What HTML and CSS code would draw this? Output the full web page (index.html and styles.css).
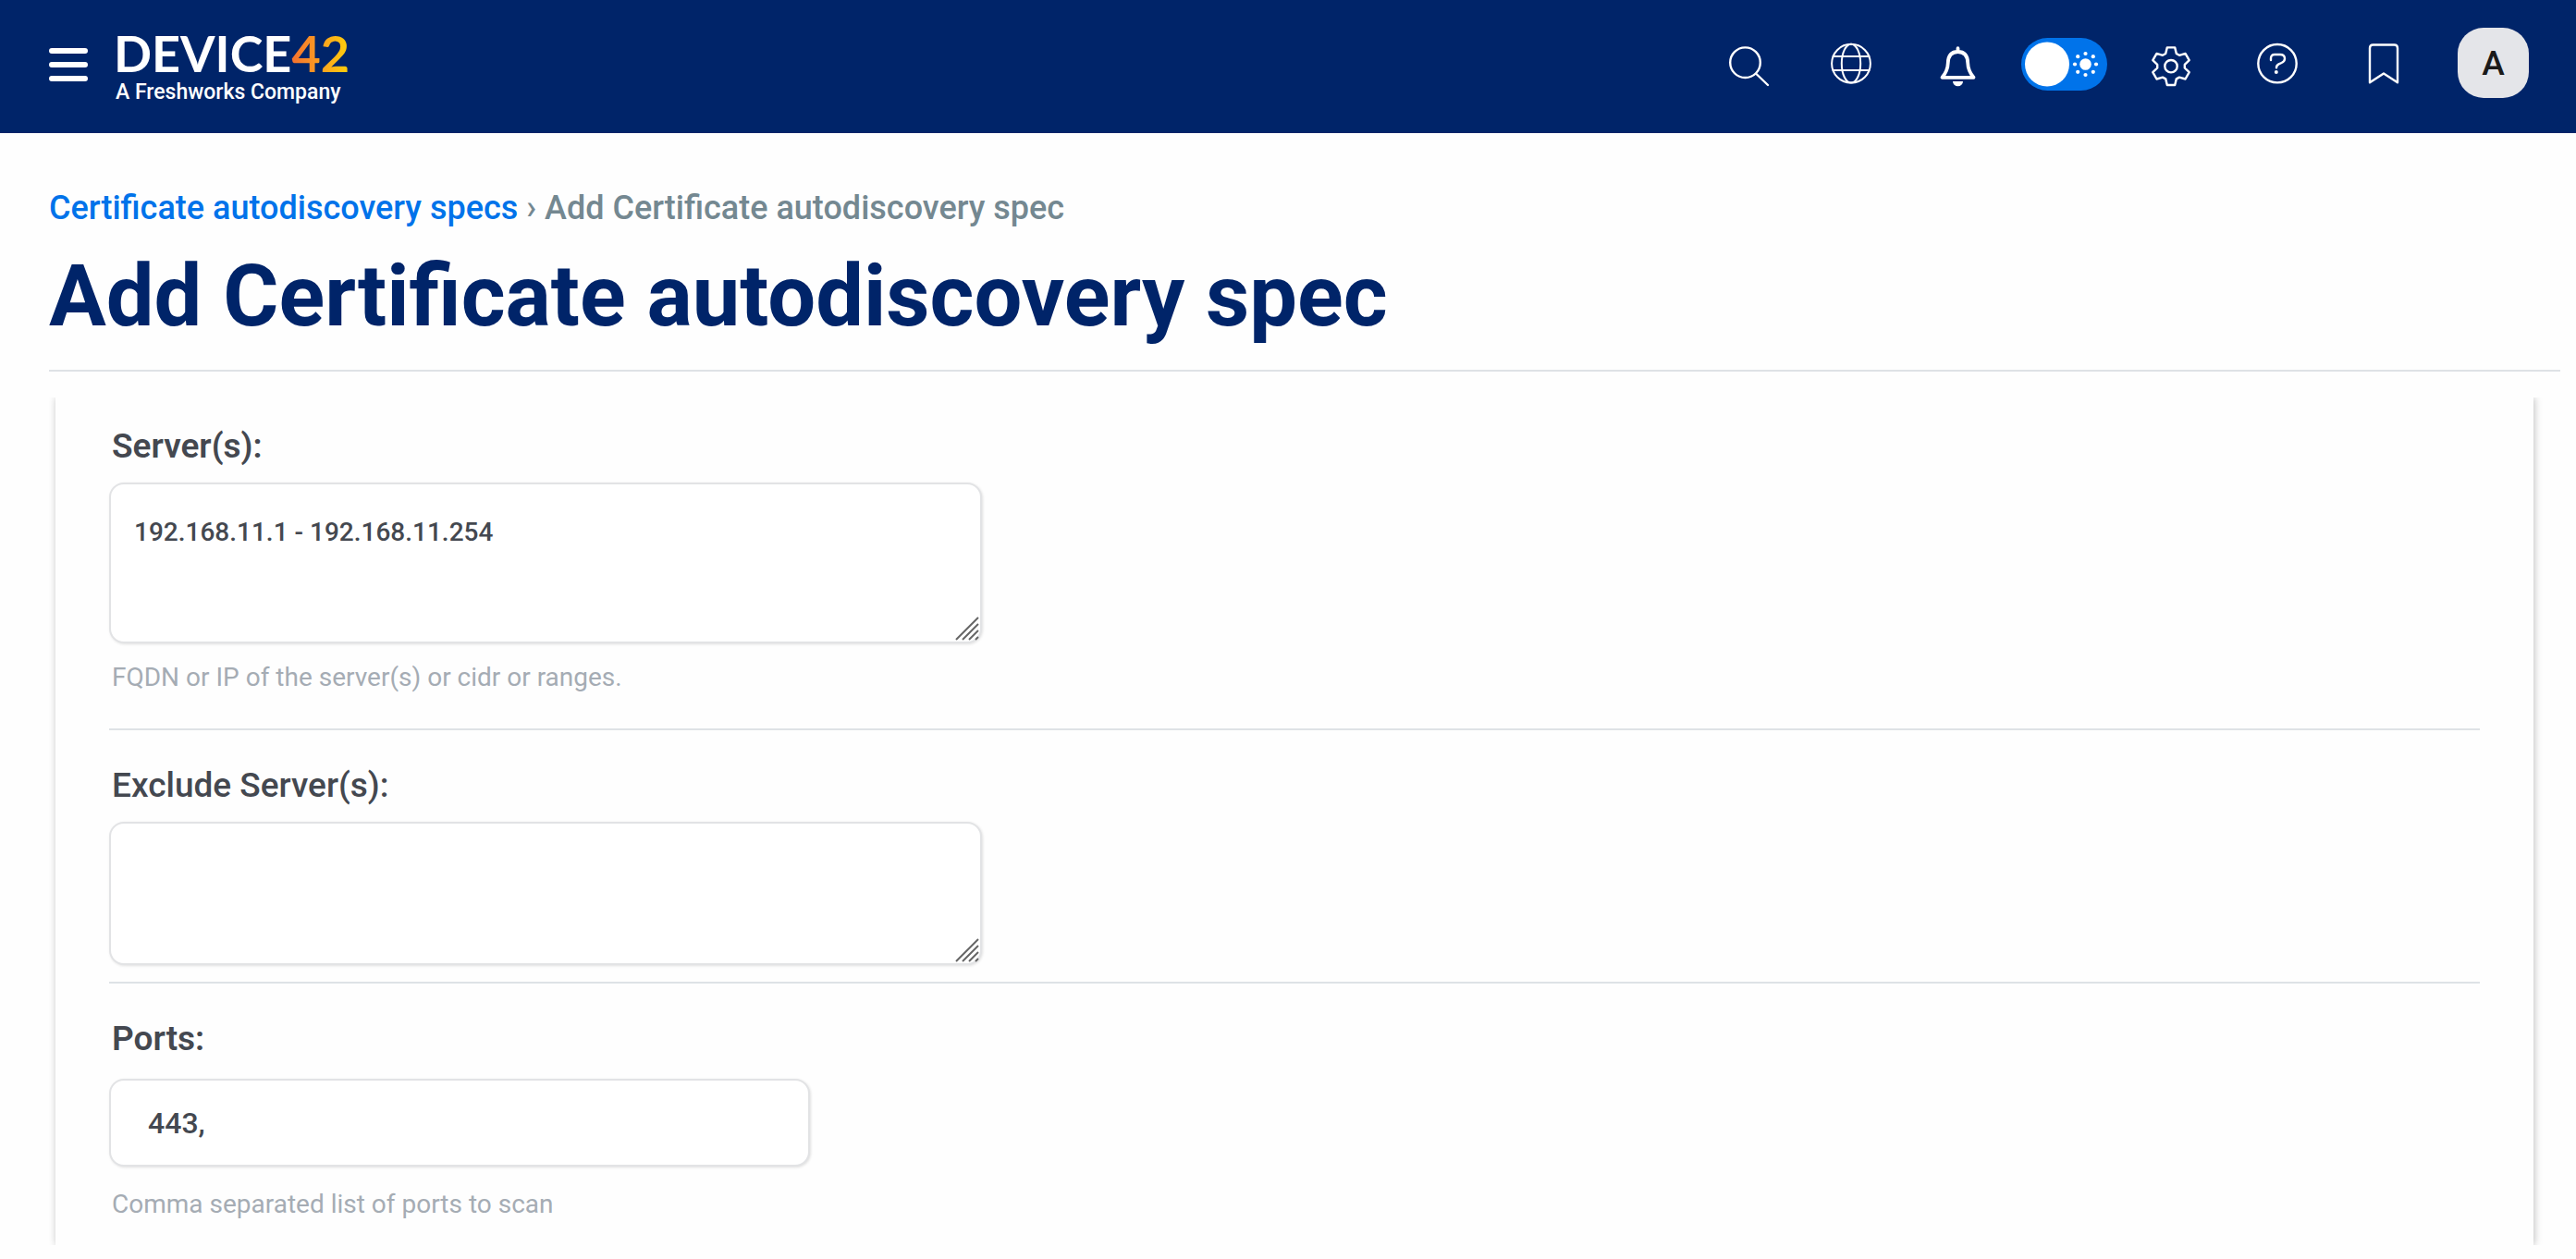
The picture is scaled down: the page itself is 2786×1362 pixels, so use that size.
FILE: index.html
```html
<!DOCTYPE html>
<html lang="en">
<head>
<meta charset="utf-8">
<meta name="viewport" content="width=device-width, initial-scale=1">
<title>Add Certificate autodiscovery spec</title>
<link rel="stylesheet" href="styles.css">
</head>
<body>
<header class="topbar">
  <button class="menu-button" type="button" aria-label="Menu">
    <svg class="menu-icon" viewBox="0 0 42 36" aria-hidden="true"><path d="M3 3h36M3 18h36M3 33h36"/></svg>
  </button>
  <a class="brand" href="#">
    <span class="brand-name">DEVICE<span class="brand-number">42</span></span>
    <span class="brand-tagline">A Freshworks Company</span>
  </a>
  <nav class="tools" aria-label="Tools">
    <button class="tool" type="button" aria-label="Search">
      <svg class="icon" viewBox="0 -4 56 56" aria-hidden="true"><circle cx="27.500" cy="23.700" r="16.300"/><path d="M39.500 36l12.500 12"/></svg>
    </button>
    <button class="tool" type="button" aria-label="Language">
      <svg class="icon icon-thin" viewBox="0 -4 56 56" aria-hidden="true"><circle cx="27" cy="24.700" r="20.900"/><ellipse cx="27" cy="24.700" rx="10.200" ry="20.900"/><path d="M7.500 17h39M7.500 32h39"/></svg>
    </button>
    <button class="tool" type="button" aria-label="Notifications">
      <svg class="icon icon-bold" viewBox="0 -4 56 56" aria-hidden="true"><path d="M27.500 12C20 12 17 17 16.800 24c-.2 7-2.300 11-6.300 15.800h34C40.500 35 38.400 31 38.200 24 38 17 35 12 27.500 12zM27.500 8.200v2.500"/><path class="icon-fill" d="M22 44h11a5.500 5.300 0 0 1-11 0z"/></svg>
    </button>
    <div class="tool">
      <label class="theme-switch">
        <input class="theme-input" type="checkbox" aria-label="Light theme" checked>
        <svg class="theme-icon" viewBox="0 0 93 57" aria-hidden="true">
          <circle cx="28" cy="28.500" r="24"/>
          <circle cx="69.500" cy="28.500" r="6.300"/>
          <circle cx="69.500" cy="17" r="2.100"/><circle cx="69.500" cy="40" r="2.100"/><circle cx="58" cy="28.500" r="2.100"/><circle cx="81" cy="28.500" r="2.100"/>
          <circle cx="61.200" cy="20.200" r="2.100"/><circle cx="77.800" cy="20.200" r="2.100"/><circle cx="61.200" cy="36.800" r="2.100"/><circle cx="77.800" cy="36.800" r="2.100"/>
        </svg>
      </label>
    </div>
    <button class="tool" type="button" aria-label="Settings">
      <svg class="icon" viewBox="-28 -31.700 56 56" aria-hidden="true"><path d="M-4.200-20.300L4.200-20.300 5.800-13.700 9-11.900 15.500-13.800 19.700-6.500 14.800-1.800 14.800 1.800 19.700 6.500 15.500 13.800 9 11.900 5.800 13.700 4.200 20.300-4.200 20.300-5.800 13.700-9 11.900-15.500 13.800-19.700 6.500-14.800 1.800-14.800-1.800-19.700-6.500-15.500-13.800-9-11.900-5.800-13.700z"/><circle r="6.700"/></svg>
    </button>
    <button class="tool" type="button" aria-label="Help">
      <svg class="icon" viewBox="0 -4 56 56" aria-hidden="true"><circle cx="28" cy="24.700" r="20.700"/><path d="M21 21v-2q0-4 4-4h6q5 0 5 4.500 0 3-3.500 4.500l-3 1.300q-2.500 1.200-2.500 4"/><circle class="icon-fill" cx="26.800" cy="34" r="2"/></svg>
    </button>
    <button class="tool" type="button" aria-label="Bookmarks">
      <svg class="icon" viewBox="0 -4 56 56" aria-hidden="true"><path d="M13 45.300V8q0-3.500 3.500-3.500h23q3.500 0 3.500 3.500v37.300L28 35.500z"/></svg>
    </button>
    <button class="avatar" type="button" aria-label="Account">A</button>
  </nav>
</header>

<main class="page">
  <nav class="breadcrumb" aria-label="Breadcrumb">
    <a class="breadcrumb-link" href="#">Certificate autodiscovery specs</a> › Add Certificate autodiscovery spec
  </nav>
  <h1 class="title">Add Certificate autodiscovery spec</h1>

  <div class="panel-clip">
    <form class="panel">
      <div class="field">
        <label class="label label-required" for="servers">Server(s):</label>
        <div class="textarea-wrap">
          <textarea class="control textarea textarea-tall" id="servers">192.168.11.1 - 192.168.11.254</textarea>
          <svg class="grip" viewBox="0 0 26 26" aria-hidden="true"><path d="M1 25L25 1M8 25L25 8M15 25l10-10M22 25l3-3"/></svg>
        </div>
        <p class="help">FQDN or IP of the server(s) or cidr or ranges.</p>
      </div>
      <div class="field field-compact">
        <label class="label" for="exclude">Exclude Server(s):</label>
        <div class="textarea-wrap">
          <textarea class="control textarea" id="exclude"></textarea>
          <svg class="grip" viewBox="0 0 26 26" aria-hidden="true"><path d="M1 25L25 1M8 25L25 8M15 25l10-10M22 25l3-3"/></svg>
        </div>
      </div>
      <div class="field field-last">
        <label class="label label-required" for="ports">Ports:</label>
        <input class="control text-input" id="ports" type="text" value="443,">
        <p class="help">Comma separated list of ports to scan</p>
      </div>
    </form>
  </div>
</main>
</body>
</html>
```
FILE: styles.css
```css
* {
  box-sizing: border-box;
}

body {
  margin: 0;
  background: #fefefe;
  color: #444850;
  font-family: Roboto, "Liberation Sans", sans-serif;
}

button {
  padding: 0;
  border: 0;
  background: none;
  font: inherit;
}

/* Top bar */
.topbar {
  display: flex;
  align-items: center;
  height: 144px;
  padding: 0 51px 8px 53px;
  background: #002469;
}

.menu-button {
  display: flex;
  padding-top: 4px;
}

.menu-icon {
  width: 42px;
  height: 36px;
  fill: none;
  stroke: #fff;
  stroke-width: 6;
  stroke-linecap: round;
}

.brand {
  display: flex;
  flex-direction: column;
  margin-left: 28px;
  padding-top: 8px;
  color: #fff;
  text-decoration: none;
  white-space: nowrap;
}

.brand-name {
  font: 700 54px/56px Lato, sans-serif;
}

.brand-number {
  background: linear-gradient(90deg, #f4702f, #fa9a22 45%, #ffd00a);
  background-clip: text;
  color: transparent;
}

.brand-tagline {
  padding-left: 2px;
  font-size: 23px;
  font-weight: 500;
  line-height: 28px;
}

.tools {
  display: flex;
  align-items: center;
  margin-left: auto;
}

.tool {
  display: flex;
  align-items: center;
  justify-content: center;
  width: 115px;
}

.icon {
  width: 56px;
  height: 56px;
  fill: none;
  stroke: #fff;
  stroke-width: 2.4;
  stroke-linecap: round;
  stroke-linejoin: round;
}

.icon-thin {
  stroke-width: 2;
}

.icon-bold {
  stroke-width: 3.8;
}

.icon-fill {
  fill: #fff;
  stroke: none;
}

.theme-switch {
  display: grid;
  padding-top: 3px;
}

.theme-input,
.theme-icon {
  grid-area: 1 / 1;
  width: 93px;
  height: 57px;
}

.theme-input {
  margin: 0;
  border-radius: 29px;
  background: #0073ea;
  appearance: none;
}

.theme-icon {
  fill: #fff;
  pointer-events: none;
}

.avatar {
  width: 77px;
  height: 76px;
  margin-left: 23px;
  border-radius: 28px;
  background: #e4e5e9;
  color: #1a1a1a;
  font-size: 37px;
  font-weight: 500;
}

/* Page heading */
.page {
  padding: 59px 17px 17px 53px;
}

.breadcrumb {
  color: #748891;
  font-size: 36px;
  font-weight: 500;
  line-height: 44px;
}

.breadcrumb-link {
  color: #0073ea;
  text-decoration: none;
}

.title {
  margin: 20px 0 28px;
  padding-bottom: 25px;
  border-bottom: 2px solid #dee2e6;
  color: #002469;
  font-size: 92px;
  font-weight: 700;
  line-height: 108px;
}

/* Form panel: only the side shadows show, top and bottom are clipped */
.panel-clip {
  overflow: hidden;
  padding: 0 29px 0 7px;
}

.panel {
  padding: 31px 58px 27px;
  box-shadow: 1px 0 8px rgba(0, 0, 0, .25);
}

.field {
  display: flex;
  flex-direction: column;
  align-items: flex-start;
  margin-bottom: 38px;
  padding-bottom: 38px;
  border-bottom: 2px solid #dee2e6;
}

.field-compact {
  padding-bottom: 18px;
}

.field-last {
  margin: 0;
  padding: 0;
  border: 0;
}

.label {
  margin-bottom: 17px;
  padding-left: 3px;
  font-size: 37px;
  font-weight: 500;
  line-height: 44px;
}

.label-required {
  font-weight: 600;
}

.control {
  display: block;
  width: 100%;
  margin: 0;
  border: 2px solid #e2e3e5;
  border-radius: 16px;
  background: #fff;
  box-shadow: 1px 1px 3px rgba(0, 0, 0, .12);
  color: #444850;
  font-family: inherit;
  font-weight: 500;
  outline: 0;
}

.textarea-wrap {
  position: relative;
  width: 100%;
  max-width: 944px;
}

.textarea {
  height: 155px;
  padding: 34px 25px;
  font-size: 28px;
  line-height: 36px;
  resize: none;
}

.textarea-tall {
  height: 174px;
}

.grip {
  position: absolute;
  right: 3px;
  bottom: 3px;
  width: 26px;
  height: 26px;
  fill: none;
  stroke: #666;
  stroke-width: 2;
  pointer-events: none;
}

.text-input {
  max-width: 758px;
  height: 95px;
  margin-top: 4px;
  padding: 0 40px;
  font-size: 32px;
}

.help {
  margin: 20px 0 0;
  padding-left: 3px;
  color: #a5acb4;
  font-size: 28px;
  line-height: 34px;
}

.field-last .help {
  margin-top: 24px;
}
```
